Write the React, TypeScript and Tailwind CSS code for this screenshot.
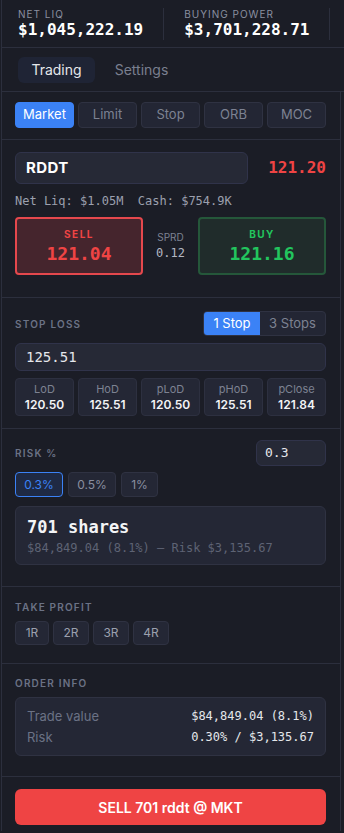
import { useState } from 'react'

const mono = { fontFamily: '"DejaVu Sans Mono", "Liberation Mono", monospace' }

const orderTypes = ['Market', 'Limit', 'Stop', 'ORB', 'MOC']

const levels = [
  { label: 'LoD', value: '120.50' },
  { label: 'HoD', value: '125.51' },
  { label: 'pLoD', value: '120.50' },
  { label: 'pHoD', value: '125.51' },
  { label: 'pClose', value: '121.84' },
]

function SectionLabel({ children }: { children: React.ReactNode }) {
  return (
    <div className="text-[10px] font-semibold tracking-[0.12em] text-[#6b7285] uppercase leading-[12px]">
      {children}
    </div>
  )
}

export default function App() {
  const [tab, setTab] = useState('Trading')
  const [orderType, setOrderType] = useState('Market')
  const [stops, setStops] = useState(1)
  const [risk, setRisk] = useState('0.3')

  return (
    <div
      className="w-[344px] min-h-screen bg-[#1b1d26] text-white overflow-hidden"
      style={{ fontFamily: 'Inter, "Noto Sans", sans-serif' }}
    >
      <div className="ml-px border-l border-[#2c2f3d]">
        {/* account stats */}
        <div className="h-[48px] border-b border-[#2c2f3d] flex items-center pl-4 whitespace-nowrap">
          <div className="pr-5 border-r border-[#2c2f3d] h-[32px] flex flex-col justify-center">
            <div className="text-[10px] leading-[12px] tracking-[0.1em] text-[#8a8fa0]">NET LIQ</div>
            <div className="text-[16px] leading-[20px] font-bold" style={mono}>$1,045,222.19</div>
          </div>
          <div className="px-5 border-r border-[#2c2f3d] h-[32px] flex flex-col justify-center">
            <div className="text-[10px] leading-[12px] tracking-[0.1em] text-[#8a8fa0]">BUYING POWER</div>
            <div className="text-[16px] leading-[20px] font-bold" style={mono}>$3,701,228.71</div>
          </div>
        </div>

        {/* tabs */}
        <div className="h-[44px] border-b border-[#2c2f3d] flex items-center gap-[8px] px-4">
          {['Trading', 'Settings'].map((t) => (
            <button
              key={t}
              onClick={() => setTab(t)}
              className={`h-[26px] w-[77px] rounded-md text-[14px] ${
                tab === t ? 'bg-[#1f2435] text-[#e5e7eb]' : 'text-[#7a7f8f]'
              }`}
            >
              {t}
            </button>
          ))}
        </div>

        <div className="w-[339px] border-r border-[#2c2f3d]">
          {/* order type */}
          <div className="border-b border-[#2c2f3d] pl-[13px] pr-[14px] pt-[10px] pb-[11px] flex gap-[4px]">
            {orderTypes.map((o) => (
              <button
                key={o}
                onClick={() => setOrderType(o)}
                className={`flex-1 h-[26px] rounded text-[13px] border ${
                  orderType === o
                    ? 'bg-[#3b82f6] border-[#3b82f6] text-white'
                    : 'bg-[#232634] border-[#2f3242] text-[#7d8292]'
                }`}
              >
                {o}
              </button>
            ))}
          </div>

          {/* symbol + quote */}
          <div className="border-b border-[#2c2f3d] pl-[13px] pr-[14px] pt-[12px] pb-[22px]">
            <div className="flex items-center gap-3">
              <div className="w-[233px] h-[32px] rounded-md bg-[#262936] border border-[#30334a] flex items-center px-[10px] text-[15px] font-bold tracking-wide">
                RDDT
              </div>
              <div className="flex-1 text-right text-[16px] font-bold text-[#ef4444]" style={mono}>
                121.20
              </div>
            </div>
            <div className="mt-[9px] text-[12px] leading-[16px] text-[#9ca0ae]" style={mono}>
              Net Liq: $1.05M&nbsp; Cash: $754.9K
            </div>
            <div className="mt-[8px] flex items-center">
              <div className="w-[128px] h-[58px] rounded border-2 border-[#e5484d] bg-[#45252d] flex flex-col items-center justify-center">
                <div className="text-[10px] font-bold tracking-[0.15em] text-[#ef4444] leading-[14px]">SELL</div>
                <div className="text-[18px] font-bold text-[#ef4444] leading-[22px] mt-[2px]" style={mono}>121.04</div>
              </div>
              <div className="flex-1 flex flex-col items-center">
                <div className="text-[10px] text-[#7d8292] leading-[13px]">SPRD</div>
                <div className="text-[12px] text-[#b3b7c3] leading-[16px] mt-[1px]" style={mono}>0.12</div>
              </div>
              <div className="w-[128px] h-[58px] rounded border-2 border-[#25573a] bg-[#202c2b] flex flex-col items-center justify-center">
                <div className="text-[10px] font-bold tracking-[0.15em] text-[#22c55e] leading-[14px]">BUY</div>
                <div className="text-[18px] font-bold text-[#22c55e] leading-[22px] mt-[2px]" style={mono}>121.16</div>
              </div>
            </div>
          </div>

          {/* stop loss */}
          <div className="border-b border-[#2c2f3d] pl-[13px] pr-[14px] pt-[13px] pb-[12px]">
            <div className="flex items-center justify-between">
              <SectionLabel>Stop Loss</SectionLabel>
              <div className="flex h-[25px] w-[123px] rounded border border-[#2f3242] bg-[#232634] overflow-hidden text-[13px]">
                <button
                  onClick={() => setStops(1)}
                  className={`w-[56px] ${stops === 1 ? 'bg-[#3b82f6] text-white' : 'text-[#7d8292]'}`}
                >
                  1 Stop
                </button>
                <button
                  onClick={() => setStops(3)}
                  className={`flex-1 ${stops === 3 ? 'bg-[#3b82f6] text-white' : 'text-[#7d8292]'}`}
                >
                  3 Stops
                </button>
              </div>
            </div>
            <div className="mt-[7px] h-[28px] rounded-md bg-[#262936] border border-[#30334a] flex items-center px-[10px] text-[14px] text-[#e5e7eb]" style={mono}>
              125.51
            </div>
            <div className="mt-[7px] flex gap-[4px]">
              {levels.map((l) => (
                <div
                  key={l.label}
                  className="flex-1 h-[38px] rounded bg-[#242735] border border-[#2d3040] flex flex-col items-center justify-center"
                >
                  <div className="text-[11px] leading-[13px] text-[#7d8292]">{l.label}</div>
                  <div className="text-[12px] leading-[15px] font-semibold text-[#f3f4f6] mt-[1px]">{l.value}</div>
                </div>
              ))}
            </div>
          </div>

          {/* risk */}
          <div className="border-b border-[#2c2f3d] pl-[13px] pr-[14px] pt-[11px] pb-[21px]">
            <div className="flex items-center justify-between">
              <SectionLabel>Risk %</SectionLabel>
              <div className="w-[70px] h-[26px] rounded-md bg-[#262936] border border-[#30334a] flex items-center px-[8px] text-[13px] text-[#e5e7eb]" style={mono}>
                0.3
              </div>
            </div>
            <div className="mt-[6px] flex gap-[5px]">
              {['0.3%', '0.5%', '1%'].map((r) => {
                const active = risk + '%' === r
                return (
                  <button
                    key={r}
                    onClick={() => setRisk(r.replace('%', ''))}
                    className={`h-[25px] rounded text-[12px] border ${r === '1%' ? 'w-[37px]' : 'w-[48px]'} ${
                      active
                        ? 'bg-[#1f2a44] border-[#3b82f6] text-[#3b82f6]'
                        : 'bg-[#242735] border-[#2f3242] text-[#8a8fa0]'
                    }`}
                  >
                    {r}
                  </button>
                )
              })}
            </div>
            <div className="mt-[9px] h-[59px] rounded-md bg-[#242735] border border-[#2f3242] px-[11px] flex flex-col justify-center">
              <div className="text-[17px] leading-[22px] font-bold text-[#f3f4f6]" style={mono}>701 shares</div>
              <div className="text-[12px] leading-[16px] text-[#5e6374] mt-[2px]" style={mono}>
                $84,849.04 (8.1%) — Risk $3,135.67
              </div>
            </div>
          </div>

          {/* take profit */}
          <div className="border-b border-[#2c2f3d] pl-[13px] pr-[14px] pt-[14px] pb-[18px]">
            <SectionLabel>Take Profit</SectionLabel>
            <div className="mt-[8px] flex gap-[4px]">
              {['1R', '2R', '3R', '4R'].map((r, i) => (
                <button
                  key={r}
                  className={`h-[24px] ${i === 0 ? 'w-[34px]' : 'w-[36px]'} rounded bg-[#242735] border border-[#2f3242] text-[12px] text-[#9ca0ae]`}
                >
                  {r}
                </button>
              ))}
            </div>
          </div>

          {/* order info */}
          <div className="border-b border-[#2c2f3d] pl-[13px] pr-[14px] pt-[13px] pb-[20px]">
            <SectionLabel>Order Info</SectionLabel>
            <div className="mt-[8px] h-[59px] rounded-md bg-[#242735] border border-[#2f3242] px-[11px] flex flex-col justify-center gap-[3px] text-[13px]">
              <div className="flex justify-between leading-[18px]">
                <span className="text-[#6b7285]">Trade value</span>
                <span className="text-[#e5e7eb] text-[12px]" style={mono}>$84,849.04 (8.1%)</span>
              </div>
              <div className="flex justify-between leading-[18px]">
                <span className="text-[#6b7285]">Risk</span>
                <span className="text-[#e5e7eb] text-[12px]" style={mono}>0.30% / $3,135.67</span>
              </div>
            </div>
          </div>

          {/* submit */}
          <div className="pl-[13px] pr-[14px] pt-[12px] pb-[6px]">
            <button className="w-full h-[36px] rounded-md bg-[#ef4444] text-white text-[14px] font-semibold">
              SELL 701 rddt @ MKT
            </button>
          </div>
        </div>
      </div>
    </div>
  )
}
